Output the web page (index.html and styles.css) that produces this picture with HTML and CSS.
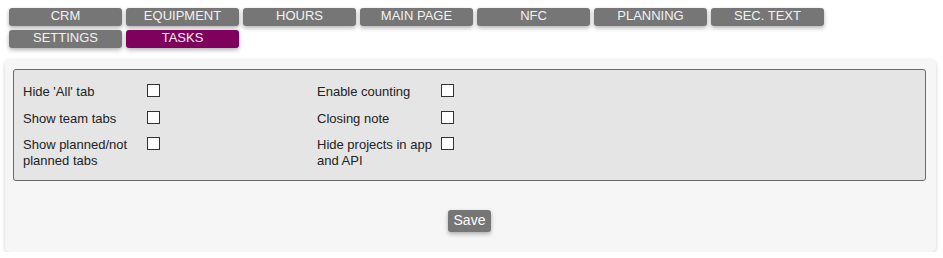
FILE: index.html
```html
<!DOCTYPE html>
<html>
	<head>
		<meta charset="UTF-8">
		<title>Settings - Tasks</title>
		<link rel="stylesheet" href="styles.css">
	</head>
	<body>
		<!-- 模块标签 -->
		<ul class="tabs">
			<li>CRM</li>
			<li>EQUIPMENT</li>
			<li>HOURS</li>
			<li>MAIN PAGE</li>
			<li>NFC</li>
			<li>PLANNING</li>
			<li>SEC. TEXT</li>
			<li>SETTINGS</li>
			<li class="current">TASKS</li>
		</ul>

		<div class="panel">
			<div class="box">
				<div class="options">
					<label class="name" for="c1">Hide 'All' tab</label>
					<span class="check"><input type="checkbox" id="c1"></span>
					<label class="name" for="c4">Enable counting</label>
					<span class="check"><input type="checkbox" id="c4"></span>

					<label class="name" for="c2">Show team tabs</label>
					<span class="check"><input type="checkbox" id="c2"></span>
					<label class="name" for="c5">Closing note</label>
					<span class="check"><input type="checkbox" id="c5"></span>

					<label class="name" for="c3">Show planned/not planned tabs</label>
					<span class="check"><input type="checkbox" id="c3"></span>
					<label class="name" for="c6">Hide projects in app and API</label>
					<span class="check"><input type="checkbox" id="c6"></span>
				</div>
			</div>
			<div class="actions">
				<button class="btn">Save</button>
			</div>
		</div>
	</body>
</html>
```

FILE: styles.css
```css
*{
	margin: 0px;
	padding: 0px;
	box-sizing: border-box;
}

ul{
	list-style: none;
}

body{
	background: #FFFFFF;
	font-family: "Liberation Sans", Arial, sans-serif;
	font-size: 13px;
	color: #222222;
}

/*标签*/
.tabs{
	display: flex;
	flex-wrap: wrap;
	gap: 4px;
	width: 830px;
	padding: 8px 0px 0px 9px;
}

.tabs li{
	width: 113px;
	height: 18px;
	line-height: 16px;
	padding-bottom: 2px;
	text-align: center;
	color: #F2F2F2;
	background: #767676;
	border-radius: 3px;
	box-shadow: 0px 2px 4px rgba(0,0,0,0.3);
	cursor: pointer;
}

.tabs li.current{
	background: #80005E;
}

/*面板*/
.panel{
	margin: 12px 7px 0px 5px;
	padding: 9px 10px 20px 8px;
	background: #F6F6F6;
	border-radius: 5px;
	box-shadow: 0px 1px 4px rgba(0,0,0,0.18);
}

.box{
	border: 1px solid #6A6A6A;
	border-radius: 3px;
	background: #E5E5E5;
	padding: 14px 9px 11px 9px;
}

.options{
	display: grid;
	grid-template-columns: 120px 174px 120px auto;
	row-gap: 10.5px;
	line-height: 16px;
}

.options .name{
	cursor: pointer;
}

.check input{
	-webkit-appearance: none;
	appearance: none;
	display: block;
	width: 13px;
	height: 13px;
	margin: 0px 0px 0px 4px;
	border: 1px solid #333333;
	background: #FFFFFF;
}

.actions{
	padding-top: 29px;
	text-align: center;
}

.btn{
	font-family: "Liberation Sans", Arial, sans-serif;
	font-size: 14px;
	height: 22px;
	line-height: 18px;
	padding: 0px 6px 2px 6px;
	color: #FFFFFF;
	background: #767676;
	border: none;
	border-radius: 3px;
	box-shadow: 0px 2px 4px rgba(0,0,0,0.3);
	cursor: pointer;
}
```
